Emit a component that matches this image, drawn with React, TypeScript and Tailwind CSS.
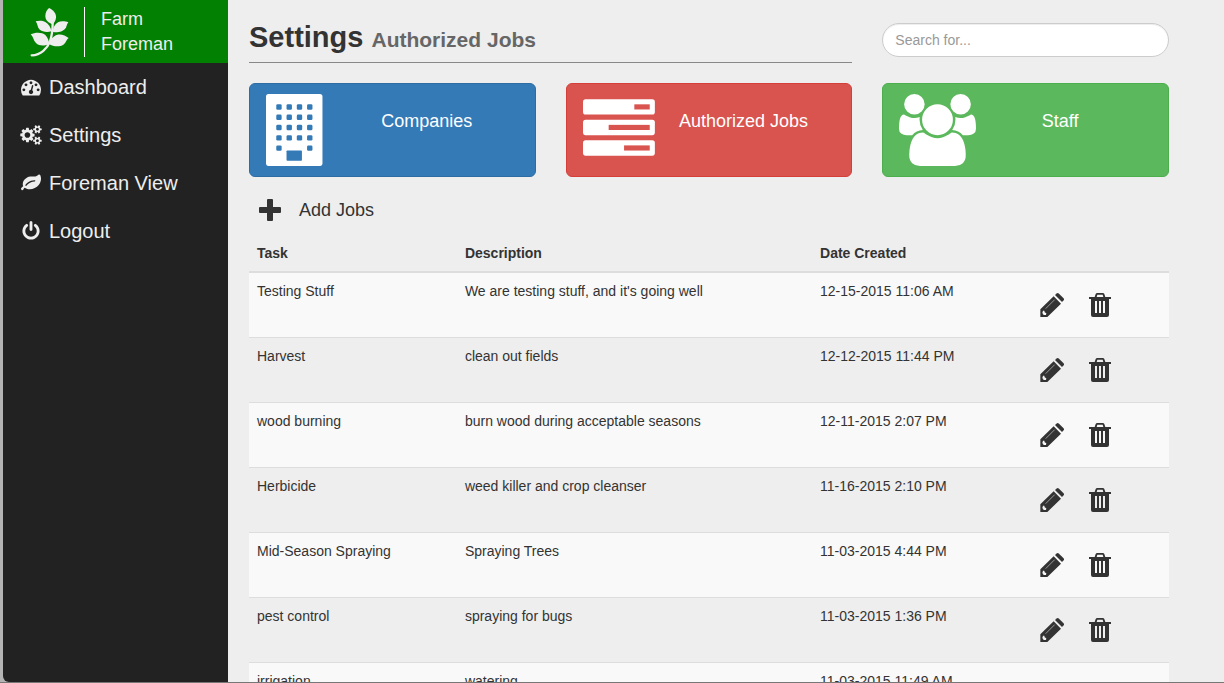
import React from "react";

type IconProps = { className?: string };

function LogoIcon({ className }: IconProps) {
  return (
    <svg viewBox="0 0 120 150" className={className} fill="currentColor" aria-hidden="true">
      <path d="M5 145 C33 144 52 124 60 103 C66 86 68 68 68 46" fill="none" stroke="currentColor" strokeWidth="7" strokeLinecap="round" />
      <path d="M57 3 C70 9 79 19 78 32 C77 41 73 47 68 52 C56 48 46 40 46 27 C46 17 51 8 57 3 Z" />
      <path d="M17 43 C25 41 37 40 46 45 C56 51 63 62 64 73 C54 77 37 76 28 67 C22 61 23 50 17 43 Z" />
      <path d="M115 46 C109 53 111 61 104 67 C95 76 80 78 68 74 C69 63 74 52 84 46 C93 41 106 43 115 46 Z" />
      <path d="M2 82 C15 76 36 75 46 84 C53 91 57 102 58 111 C45 117 28 118 18 108 C10 101 10 89 2 82 Z" />
      <path d="M116 93 C108 99 109 107 100 113 C89 121 69 119 57 111 C60 98 69 87 82 83 C94 80 107 86 116 93 Z" />
    </svg>
  );
}

function DashboardIcon({ className }: IconProps) {
  return (
    <svg viewBox="0 0 1792 1792" className={className} fill="currentColor" aria-hidden="true">
      <path d="M384 1152q0-53-37.5-90.5t-90.5-37.5-90.5 37.5-37.5 90.5 37.5 90.5 90.5 37.5 90.5-37.5 37.5-90.5zm192-448q0-53-37.5-90.5t-90.5-37.5-90.5 37.5-37.5 90.5 37.5 90.5 90.5 37.5 90.5-37.5 37.5-90.5zm428 481l101-382q6-26-7.5-48.5t-38.5-29.5-48 6.5-30 39.5l-101 382q-60 5-107 43.5t-63 98.5q-20 77 20 146t117 89 146-20 89-117q16-60-6-117t-72-91zm660-33q0-53-37.5-90.5t-90.5-37.5-90.5 37.5-37.5 90.5 37.5 90.5 90.5 37.5 90.5-37.5 37.5-90.5zm-640-640q0-53-37.5-90.5t-90.5-37.5-90.5 37.5-37.5 90.5 37.5 90.5 90.5 37.5 90.5-37.5 37.5-90.5zm448 192q0-53-37.5-90.5t-90.5-37.5-90.5 37.5-37.5 90.5 37.5 90.5 90.5 37.5 90.5-37.5 37.5-90.5zm320 448q0 261-141 483-19 29-54 29h-1402q-35 0-54-29-141-221-141-483 0-182 71-348t191-286 286-191 348-71 348 71 286 191 191 286 71 348z" />
    </svg>
  );
}

function CogsIcon({ className }: IconProps) {
  return (
    <svg viewBox="0 0 1920 1792" className={className} fill="currentColor" aria-hidden="true">
      <path d="M896 896q0-106-75-181t-181-75-181 75-75 181 75 181 181 75 181-75 75-181zm768 512q0-52-38-90t-90-38-90 38-38 90q0 53 37.5 90.5t90.5 37.5 90.5-37.5 37.5-90.5zm0-1024q0-52-38-90t-90-38-90 38-38 90q0 53 37.5 90.5t90.5 37.5 90.5-37.5 37.5-90.5zm-384 421v185q0 10-7 19.5t-16 10.5l-155 24q-11 35-32 76 34 48 90 115 7 11 7 20 0 12-7 19-23 30-82.5 89.5t-78.5 59.5q-11 0-21-7l-115-90q-37 19-77 31-11 108-23 155-7 24-30 24h-186q-11 0-20-7.5t-10-17.5l-23-153q-34-10-75-31l-118 89q-7 7-20 7-11 0-21-8-144-133-144-160 0-9 7-19 10-14 41-53t47-61q-23-44-35-82l-152-24q-10-1-17-9.5t-7-19.5v-185q0-10 7-19.5t16-10.5l155-24q11-35 32-76-34-48-90-115-7-11-7-20 0-12 7-20 22-30 82-89t79-59q11 0 21 7l115 90q34-18 77-32 11-108 23-154 7-24 30-24h186q11 0 20 7.5t10 17.5l23 153q34 10 75 31l118-89q8-7 20-7 11 0 21 8 144 133 144 160 0 8-7 19-12 16-42 54t-45 60q23 48 34 82l152 23q10 2 17 10.5t7 19.5zm640 533v140q0 16-149 31-12 27-30 52 51 113 51 138 0 4-4 7-122 71-124 71-8 0-46-47t-52-68q-20 2-30 2t-30-2q-14 21-52 68t-46 47q-2 0-124-71-4-3-4-7 0-25 51-138-18-25-30-52-149-15-149-31v-140q0-16 149-31 13-29 30-52-51-113-51-138 0-4 4-7 4-2 35-20t59-34 30-16q8 0 46 46.5t52 67.5q20-2 30-2t30 2q51-71 92-112l6-2q4 0 124 70 4 3 4 7 0 25-51 138 17 23 30 52 149 15 149 31zm0-1024v140q0 16-149 31-12 27-30 52 51 113 51 138 0 4-4 7-122 71-124 71-8 0-46-47t-52-68q-20 2-30 2t-30-2q-14 21-52 68t-46 47q-2 0-124-71-4-3-4-7 0-25 51-138-18-25-30-52-149-15-149-31v-140q0-16 149-31 13-29 30-52-51-113-51-138 0-4 4-7 4-2 35-20t59-34 30-16q8 0 46 46.5t52 67.5q20-2 30-2t30 2q51-71 92-112l6-2q4 0 124 70 4 3 4 7 0 25-51 138 17 23 30 52 149 15 149 31z" />
    </svg>
  );
}

function LeafIcon({ className }: IconProps) {
  return (
    <svg viewBox="0 0 1792 1792" className={className} fill="currentColor" aria-hidden="true">
      <path d="M1280 704q0-26-19-45t-45-19q-172 0-318 49.5t-259.5 134-235.5 219.5q-19 21-19 45 0 26 19 45t45 19q24 0 45-19 27-24 74-71t67-66q137-124 268.5-176t313.5-52q26 0 45-19t19-45zm512-198q0 95-20 193-46 224-184.5 383t-357.5 268q-214 108-438 108-148 0-286-47-15-5-88-42t-96-37q-16 0-39.5 32t-45 70-52.5 70-60 32q-43 0-63.5-17.5t-45.5-59.5q-2-4-6-11t-5.5-10-3-9.5-1.5-13.5q0-35 31-73.5t68-65.5 68-56 31-48q0-4-14-38t-16-44q-9-51-9-104 0-115 43.5-220t119-184.5 170.5-139 204-95.5q55-18 145-25.5t179.5-9 178.5-6 163.5-24 113.5-56.5l29.5-29.5 29.5-28 27-20 36.5-16 43.5-4.5q39 0 70.5 46t47.5 112 24 124 8 96z" />
    </svg>
  );
}

function PowerIcon({ className }: IconProps) {
  return (
    <svg viewBox="0 0 1792 1792" className={className} fill="currentColor" aria-hidden="true">
      <path d="M1664 896q0 156-61 298t-164 245-245 164-298 61-298-61-245-164-164-245-61-298q0-182 80.5-343t226.5-270q43-32 95.5-25t83.5 50q32 42 24.5 94.5t-49.5 84.5q-98 74-151.5 181t-53.5 228q0 104 40.5 198.5t109.5 163.5 163.5 109.5 198.5 40.5 198.5-40.5 163.5-109.5 109.5-163.5 40.5-198.5q0-121-53.5-228t-151.5-181q-42-32-49.5-84.5t24.5-94.5q31-43 84-50t95 25q146 109 226.5 270t80.5 343zm-640-768v640q0 52-38 90t-90 38-90-38-38-90v-640q0-52 38-90t90-38 90 38 38 90z" />
    </svg>
  );
}

function BuildingIcon({ className }: IconProps) {
  const windows: [number, number][] = [];
  for (let row = 2; row <= 10; row += 2) {
    for (let col = 2; col <= 8; col += 2) {
      if (row < 10 || col === 2 || col === 8) windows.push([col, row]);
    }
  }
  return (
    <svg viewBox="0 0 15 14" className={className} aria-hidden="true">
      <rect width="11" height="14" rx="0.5" fill="#fff" />
      {windows.map(([x, y]) => (
        <rect key={`${x}-${y}`} x={x} y={y} width="1.05" height="1.05" rx="0.25" fill="#337ab7" />
      ))}
      <rect x="4" y="11" width="3" height="2" rx="0.15" fill="#337ab7" />
    </svg>
  );
}

function TasksIcon({ className }: IconProps) {
  return (
    <svg viewBox="0 0 15 14" className={className} aria-hidden="true">
      <g fill="#fff">
        <rect y="1" width="14" height="3" rx="0.5" />
        <rect y="5" width="14" height="3" rx="0.5" />
        <rect y="9" width="14" height="3" rx="0.5" />
      </g>
      <g fill="#d9534f">
        <rect x="10" y="2" width="3" height="1" />
        <rect x="5" y="6" width="8" height="1" />
        <rect x="8" y="10" width="5" height="1" />
      </g>
    </svg>
  );
}

function UsersIcon({ className }: IconProps) {
  return (
    <svg viewBox="0 0 1920 1792" className={className} fill="currentColor" aria-hidden="true">
      <path d="M593 896q-162 5-265 128h-134q-82 0-138-40.5t-56-118.5q0-353 124-353 6 0 43.5 21t97.5 42.5 119 21.5q67 0 133-23-5 37-5 66 0 139 81 256zm1071 637q0 120-73 189.5t-194 69.5h-874q-121 0-194-69.5t-73-189.5q0-53 3.5-103.5t14-109 26.5-108.5 43-97.5 62-81 85.5-53.5 111.5-20q10 0 43 21.5t73 48 107 48 135 21.5 135-21.5 107-48 73-48 43-21.5q61 0 111.5 20t85.5 53.5 62 81 43 97.5 26.5 108.5 14 109 3.5 103.5zm-1024-1277q0 106-75 181t-181 75-181-75-75-181 75-181 181-75 181 75 75 181zm704 384q0 159-112.5 271.5t-271.5 112.5-271.5-112.5-112.5-271.5 112.5-271.5 271.5-112.5 271.5 112.5 112.5 271.5zm576 225q0 78-56 118.5t-138 40.5h-134q-103-123-265-128 81-117 81-256 0-29-5-66 66 23 133 23 59 0 119-21.5t97.5-42.5 43.5-21q124 0 124 353zm-128-609q0 106-75 181t-181 75-181-75-75-181 75-181 181-75 181 75 75 181z" />
    </svg>
  );
}

function PlusIcon({ className }: IconProps) {
  return (
    <svg viewBox="0 0 22 22" className={className} fill="currentColor" aria-hidden="true">
      <rect x="8" width="6" height="22" rx="1" />
      <rect y="8" width="22" height="6" rx="1" />
    </svg>
  );
}

function PencilIcon({ className }: IconProps) {
  return (
    <svg viewBox="0 0 72 72" className={className} aria-hidden="true">
      <path fill="currentColor" fillRule="evenodd" d="M1 72V49L41 10L63 32L22 72ZM9 53L7 60L11 66L18 66L19 61L14 58L13 53Z" />
      <path d="M17 47L44 20" stroke="#fff" strokeOpacity="0.6" strokeWidth="2.5" />
      <path fill="currentColor" d="M45 6L50 1.500Q53-1 57 2L70 15Q74 19 71 22L66 27Z" />
    </svg>
  );
}

function TrashIcon({ className }: IconProps) {
  return (
    <svg viewBox="0 0 72 72" className={className} fill="currentColor" aria-hidden="true">
      <path fillRule="evenodd" d="M3 12H20L23 3Q24 0 28 0H44Q48 0 49 3L52 12H69V18H63V66Q63 72 57 72H15Q9 72 9 66V18H3ZM26 12H46L44 5H28ZM21 24V60H27V24ZM33 24V60H39V24ZM45 24V60H51V24Z" />
    </svg>
  );
}

const navItems = [
  { label: "Dashboard", Icon: DashboardIcon, size: "size-5" },
  { label: "Settings", Icon: CogsIcon, size: "h-5 w-[22px]" },
  { label: "Foreman View", Icon: LeafIcon, size: "size-5" },
  { label: "Logout", Icon: PowerIcon, size: "size-5" },
];

const cards = [
  { label: "Companies", Icon: BuildingIcon, color: "border-[#2e6da4] bg-[#337ab7]" },
  { label: "Authorized Jobs", Icon: TasksIcon, color: "border-[#d43f3a] bg-[#d9534f]" },
  { label: "Staff", Icon: UsersIcon, color: "border-[#4cae4c] bg-[#5cb85c]" },
];

const jobs = [
  { task: "Testing Stuff", description: "We are testing stuff, and it's going well", created: "12-15-2015 11:06 AM" },
  { task: "Harvest", description: "clean out fields", created: "12-12-2015 11:44 PM" },
  { task: "wood burning", description: "burn wood during acceptable seasons", created: "12-11-2015 2:07 PM" },
  { task: "Herbicide", description: "weed killer and crop cleanser", created: "11-16-2015 2:10 PM" },
  { task: "Mid-Season Spraying", description: "Spraying Trees", created: "11-03-2015 4:44 PM" },
  { task: "pest control", description: "spraying for bugs", created: "11-03-2015 1:36 PM" },
  { task: "irrigation", description: "watering", created: "11-03-2015 11:49 AM" },
];

function Sidebar() {
  return (
    <aside className="w-[225px] shrink-0 overflow-hidden rounded-bl-md bg-[#222] text-[#eee]">
      <a href="#home" className="flex h-[63px] items-center bg-[#028002] pl-[27px]">
        <LogoIcon className="h-[50px] w-10" />
        <span className="ml-[14px] border-l border-white pl-4 text-lg leading-[25px]">
          Farm
          <br />
          Foreman
        </span>
      </a>
      <nav>
        <ul>
          {navItems.map(({ label, Icon, size }) => (
            <li key={label}>
              <a href={`#${label.toLowerCase().replace(" ", "-")}`} className="flex h-12 items-center gap-[7px] pl-[17px] text-xl">
                <span className="flex w-[22px] justify-center">
                  <Icon className={size} />
                </span>
                {label}
              </a>
            </li>
          ))}
        </ul>
      </nav>
    </aside>
  );
}

function JobsTable() {
  return (
    <table className="w-full table-fixed border-collapse text-left text-sm leading-5">
      <thead>
        <tr className="border-b-2 border-[#ddd]">
          <th className="w-[22.6%] p-2 font-bold">Task</th>
          <th className="w-[38.6%] p-2 font-bold">Description</th>
          <th className="w-[23.9%] p-2 font-bold">Date Created</th>
          <th className="p-2" aria-label="Actions" />
        </tr>
      </thead>
      <tbody>
        {jobs.map((job) => (
          <tr key={job.task} className="border-b border-[#ddd] align-top odd:bg-[#f9f9f9]">
            <td className="p-2">{job.task}</td>
            <td className="p-2">{job.description}</td>
            <td className="p-2">{job.created}</td>
            <td className="p-2">
              <div className="flex h-12 items-center gap-6">
                <button type="button" aria-label={`Edit ${job.task}`}>
                  <PencilIcon className="size-6" />
                </button>
                <button type="button" aria-label={`Delete ${job.task}`}>
                  <TrashIcon className="size-6" />
                </button>
              </div>
            </td>
          </tr>
        ))}
      </tbody>
    </table>
  );
}

export default function App() {
  return (
    <div className="flex h-screen overflow-hidden border-b border-[#777] bg-[#eee] font-['Liberation_Sans',Arial,sans-serif] text-[#333]">
      <div className="flex shrink-0 bg-[#b4b4b4] pl-[3px]">
        <Sidebar />
      </div>
      <main className="min-w-0 flex-1 pt-[21px] pr-[55px] pl-[21px]">
        <header className="grid grid-cols-3 gap-x-[30px]">
          <h1 className="col-span-2 border-b border-[#888] pb-[6px] text-[29px] leading-8 font-bold">
            Settings <small className="text-[21px] text-[#666]">Authorized Jobs</small>
          </h1>
          <input
            type="search"
            aria-label="Search for"
            placeholder="Search for..."
            className="mt-0.5 h-[34px] w-full rounded-full border border-[#ccc] bg-white px-3 text-sm shadow-[inset_0_1px_1px_rgba(0,0,0,0.075)] placeholder:text-[#999]"
          />
        </header>
        <div className="mt-5 grid grid-cols-3 gap-x-[30px]">
          {cards.map(({ label, Icon, color }) => (
            <button key={label} type="button" className={`flex h-[94px] items-center rounded-md border pr-6 pl-4 text-lg leading-5 text-white ${color}`}>
              <Icon className="h-[72px] w-[77px] shrink-0" />
              <span className="flex-1 pb-[18px] text-center">{label}</span>
            </button>
          ))}
        </div>
        <button type="button" className="mt-5 mb-3 flex items-center gap-[18px] pl-[10px] text-lg leading-[26px]">
          <PlusIcon className="size-[22px]" />
          Add Jobs
        </button>
        <JobsTable />
      </main>
    </div>
  );
}
